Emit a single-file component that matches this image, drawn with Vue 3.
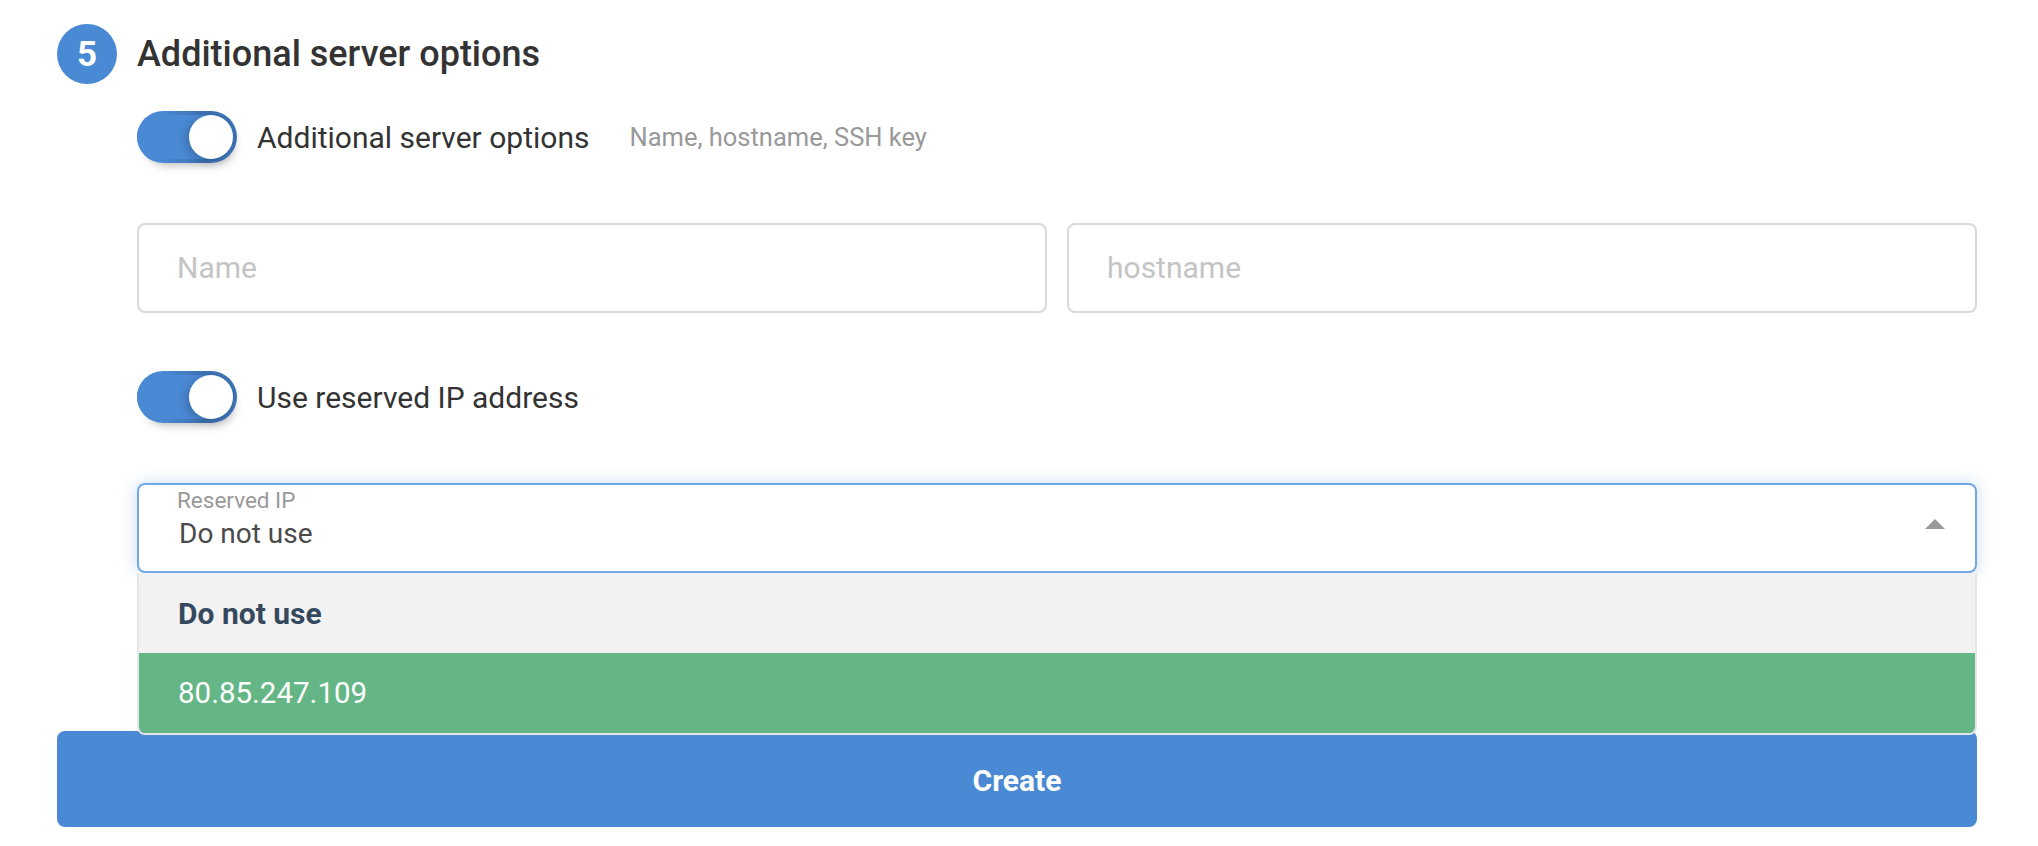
<script setup>
const options = [
  { label: 'Do not use', cls: 'current' },
  { label: '80.85.247.109', cls: 'hover' }
]
</script>

<template>
  <div class="page">
    <div class="step-head">
      <div class="step-num">5</div>
      <h2 class="step-title">Additional server options</h2>
    </div>
    <div class="body">
      <div class="toggle-row first">
        <span class="toggle"><span class="knob"></span></span>
        <span class="toggle-label">Additional server options</span>
        <span class="hint">Name, hostname, SSH key</span>
      </div>
      <div class="inputs">
        <div class="input">Name</div>
        <div class="input">hostname</div>
      </div>
      <div class="toggle-row second">
        <span class="toggle"><span class="knob"></span></span>
        <span class="toggle-label">Use reserved IP address</span>
      </div>
      <div class="select-wrap">
        <div class="select">
          <span class="select-caption">Reserved IP</span>
          <span class="select-value">Do not use</span>
          <span class="arrow"></span>
        </div>
        <div class="menu">
          <div v-for="o in options" :key="o.label" class="option" :class="o.cls">{{ o.label }}</div>
        </div>
      </div>
    </div>
    <button class="create">Create</button>
  </div>
</template>

<style>
html, body { margin: 0; background: #fff; }
</style>

<style scoped>
.page {
  box-sizing: border-box;
  width: 2038px;
  height: 846px;
  padding: 24px 61px 0 57px;
  font-family: Roboto, "Noto Sans", sans-serif;
  color: #333;
  overflow: hidden;
}
.step-head { display: flex; align-items: center; gap: 20px; height: 60px; }
.step-num {
  width: 60px;
  height: 60px;
  border-radius: 50%;
  background: #4a89d4;
  color: #fff;
  font-size: 35px;
  font-weight: 700;
  display: flex;
  align-items: center;
  justify-content: center;
}
.step-title { margin: 0; font-size: 36px; font-weight: 500; color: #333; }
.body { margin-left: 80px; }
.toggle-row { display: flex; align-items: center; height: 52px; }
.toggle-row.first { margin-top: 27px; }
.toggle-row.second { margin-top: 58px; }
.toggle {
  box-sizing: border-box;
  position: relative;
  width: 100px;
  height: 52px;
  border-radius: 26px;
  padding: 4px;
  background: linear-gradient(to right, #4a89d4 0%, #4a89d4 25%, #3d72b4 65%, #3d72b4 100%);
  display: flex;
  justify-content: flex-end;
  box-shadow: 3px 8px 10px -6px rgba(0, 0, 0, 0.28);
}
.toggle::before {
  content: "";
  position: absolute;
  left: 0;
  top: 4px;
  right: 4px;
  bottom: 4px;
  border-radius: 22px;
  background: #4a89d4;
}
.knob {
  position: relative;
  width: 44px;
  height: 44px;
  border-radius: 50%;
  background: #fff;
  box-shadow: -3px 2px 8px rgba(0, 0, 0, 0.2);
}
.toggle-label { margin-left: 20px; font-size: 30px; color: #333; }
.hint { margin-left: 40px; font-size: 25.5px; color: #999; }
.inputs { display: flex; gap: 20px; margin-top: 60px; }
.input {
  box-sizing: border-box;
  flex: 1;
  height: 90px;
  border: 2px solid #d9d9d9;
  border-radius: 8px;
  padding: 0 0 2px 38px;
  display: flex;
  align-items: center;
  font-size: 30px;
  color: #c4c4c4;
}
.select-wrap { position: relative; margin-top: 60px; }
.select {
  box-sizing: border-box;
  position: relative;
  height: 90px;
  border: 2px solid #71a9e6;
  border-radius: 8px;
  background: #fff;
  padding: 2px 0 0 38px;
  box-shadow: 0 0 16px rgba(74, 137, 212, 0.3);
  display: flex;
  flex-direction: column;
}
.select-caption { font-size: 22.5px; line-height: 26px; color: #999; }
.select-value { font-size: 28px; line-height: 42px; color: #4a4a4a; margin-left: 2px; }
.arrow {
  position: absolute;
  right: 30px;
  top: 34px;
  width: 0;
  height: 0;
  border-left: 10px solid transparent;
  border-right: 10px solid transparent;
  border-bottom: 10px solid #999;
}
.menu {
  box-sizing: border-box;
  position: absolute;
  z-index: 2;
  left: 0;
  right: 0;
  top: 90px;
  border: 2px solid #e6e6e6;
  border-top: 0;
  border-radius: 0 0 8px 8px;
  overflow: hidden;
}
.option {
  height: 80px;
  padding-left: 39px;
  display: flex;
  align-items: center;
  font-size: 29.5px;
}
.option.current { background: #f2f2f2; color: #35495e; font-weight: 700; font-size: 30px; }
.option.hover { background: #65b686; color: #fff; }
.create {
  display: block;
  width: 100%;
  height: 96px;
  margin-top: 158px;
  padding: 2px 0 0;
  border: 0;
  border-radius: 8px;
  background: #4a89d4;
  color: #fff;
  font-family: inherit;
  font-size: 30px;
  font-weight: 700;
}
</style>
